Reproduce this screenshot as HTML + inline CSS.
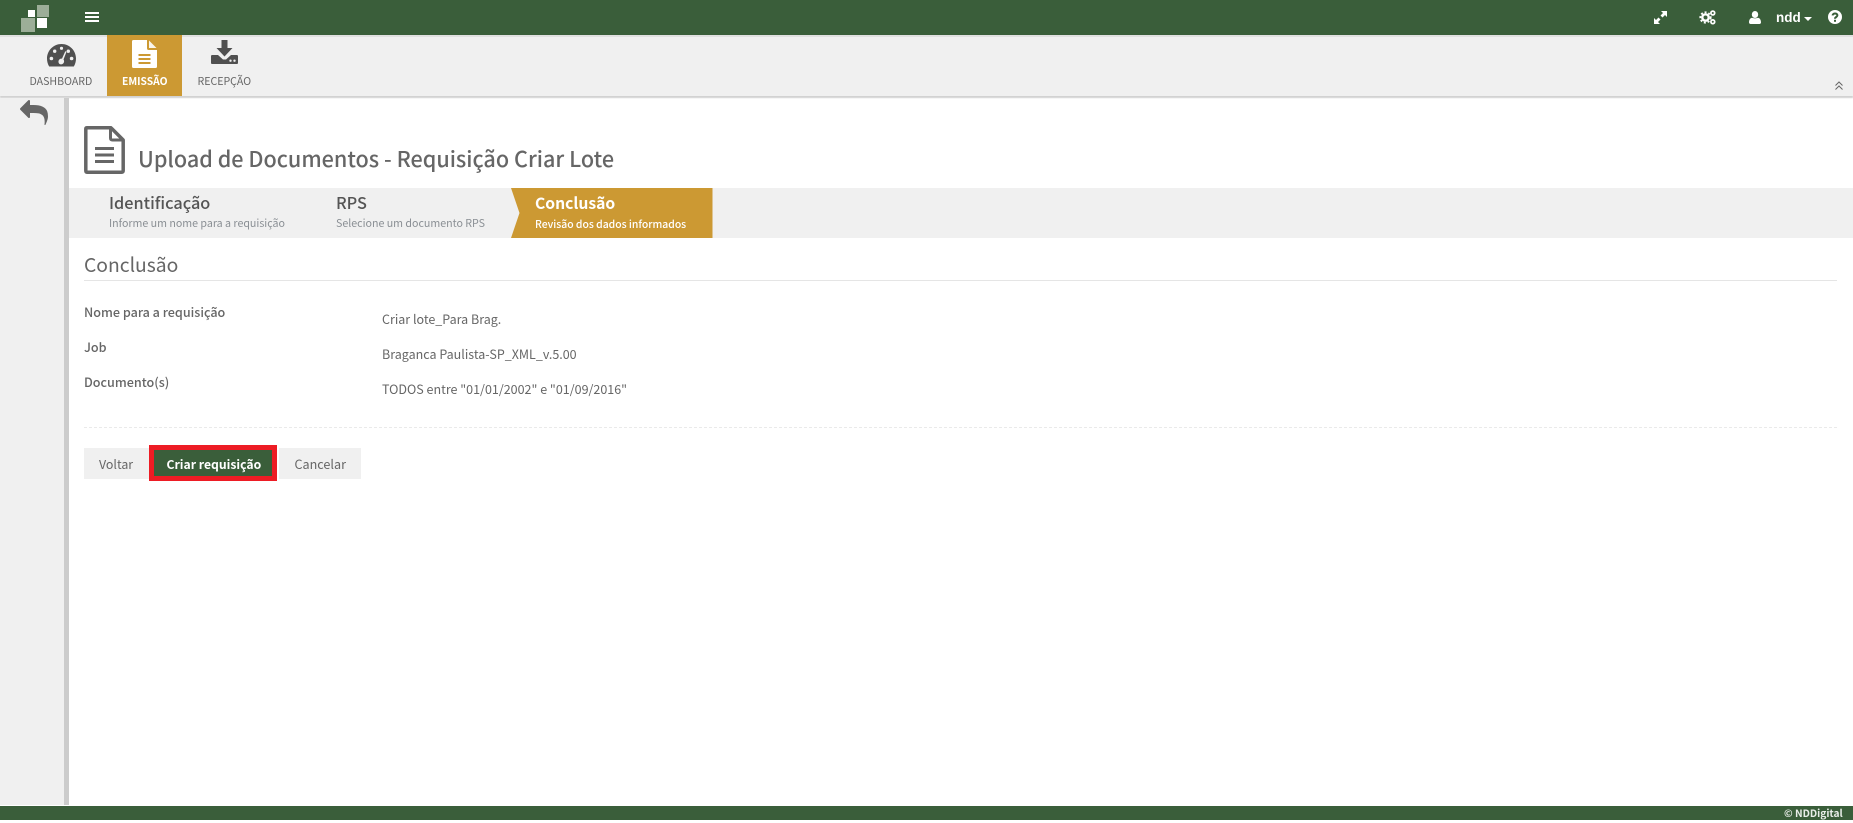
<!DOCTYPE html>
<html lang="pt"><head><meta charset="utf-8"><title>Upload de Documentos</title>
<style>
html,body{margin:0;padding:0;background:#fff}
body{width:1853px;height:821px;position:relative;overflow:hidden;font-family:"Noto Sans CJK JP","Liberation Sans",sans-serif;color:#666}
.a{position:absolute}
.t{position:absolute;white-space:nowrap;line-height:20px;height:20px}
svg{position:absolute;display:block;overflow:visible}
</style></head><body>
<div class="a" style="left:0;top:0;width:1853px;height:35px;background:#3a5e3a"></div>
<div class="a" style="left:0;top:35px;width:1853px;height:61px;background:#f0f0f0;box-shadow:0 2px 1px #d2d2d2"></div>
<div class="a" style="left:0;top:35px;width:1853px;height:2px;background:#e0e0e0"></div>
<div class="a" style="left:21px;top:18px;width:14px;height:14px;background:#9cae98"></div>
<div class="a" style="left:37px;top:5px;width:12px;height:12px;background:#9cae98"></div>
<div class="a" style="left:28px;top:10px;width:7px;height:7px;background:#fff"></div>
<div class="a" style="left:37px;top:18px;width:10px;height:10px;background:#fff"></div>
<div class="a" style="left:85px;top:12px;width:14px;height:2px;background:#fff"></div>
<div class="a" style="left:85px;top:16px;width:14px;height:2px;background:#fff"></div>
<div class="a" style="left:85px;top:20px;width:14px;height:2px;background:#fff"></div>

<svg style="left:1654px;top:11px" width="13" height="13" viewBox="0 0 13 13"><path fill="#fff" d="M7 0H13V6L11 4 8.500 6.500 6.500 4.500 9 2zM6 13H0V7L2 9 4.500 6.500 6.500 8.500 4 11z"/></svg>
<svg style="left:1700px;top:10px" width="16" height="15" viewBox="0 0 16 15"><circle cx="5.500" cy="7.500" r="3.200" fill="none" stroke="#fff" stroke-width="2.400"/><circle cx="5.500" cy="7.500" r="5.200" fill="none" stroke="#fff" stroke-width="1.800" stroke-dasharray="2 1.900"/><circle cx="12.800" cy="3" r="1.900" fill="none" stroke="#fff" stroke-width="1.700"/><circle cx="12.800" cy="11.800" r="1.900" fill="none" stroke="#fff" stroke-width="1.700"/></svg>
<svg style="left:1749px;top:11px" width="12" height="13" viewBox="0 0 12 13"><ellipse cx="6" cy="3.500" rx="3.200" ry="3.500" fill="#fff"/><path fill="#fff" d="M0 11.500C0 8.500 1.500 7 3.200 6.800 4 7.500 8 7.500 8.800 6.800 10.500 7 12 8.500 12 11.500 12 12.500 11 13 10.500 13H1.500C1 13 0 12.500 0 11.500z"/></svg>
<div class="t" style="left:1776px;top:8px;font:bold 13.500px/20px 'Liberation Sans',sans-serif;color:#fff">ndd</div>
<svg style="left:1804px;top:17px" width="8" height="4" viewBox="0 0 8 4"><path fill="#fff" d="M0 0H8L4 4z"/></svg>
<svg style="left:1828px;top:10px" width="14" height="14" viewBox="0 0 14 14"><circle cx="7" cy="7" r="7" fill="#fff"/><path fill="none" stroke="#3a5e3a" stroke-width="2" d="M4.600 5.400C4.800 2.800 9.400 2.900 9.400 5.300 9.400 7 7 7 7 8.700"/><rect x="6" y="9.800" width="2" height="2" fill="#3a5e3a"/></svg>

<svg style="left:46.500px;top:44px" width="29" height="22.500" viewBox="0 0 29 22.500"><path fill="#505050" fill-rule="evenodd" d="M14.500 0C6.500 0 0 6.500 0 14.500 0 17.500.8 20.200 2.200 22.500H26.800C28.200 20.200 29 17.500 29 14.500 29 6.500 22.500 0 14.500 0zM14.500 2.700A1.600 1.600 0 1 1 14.500 5.900 1.600 1.600 0 1 1 14.500 2.700zM7.700 5.500A1.700 1.700 0 1 1 7.700 8.900 1.700 1.700 0 1 1 7.700 5.500zM21.300 5.500A1.700 1.700 0 1 1 21.300 8.900 1.700 1.700 0 1 1 21.300 5.500zM4.400 12.700A1.800 1.800 0 1 1 4.400 16.300 1.800 1.800 0 1 1 4.400 12.700zM24.600 12.700A1.800 1.800 0 1 1 24.600 16.300 1.800 1.800 0 1 1 24.600 12.700zM18.300 7.200L19.500 7.700 16.500 15.500C18 17.500 16.500 20.500 14 20.400 11.500 20.300 10.500 17 12.600 15.200 13.200 14.700 14.200 14.500 15 14.600z"/></svg>
<div class="a" style="left:107px;top:35px;width:75px;height:61px;background:#cc9933"></div>
<svg style="left:132px;top:40px" width="25" height="28" viewBox="0 0 25 28"><path fill="#fff" d="M1.500 0H15V8C15 9.500 15.500 10 17 10H25V26.500C25 27.500 24.500 28 23.500 28H1.500C.5 28 0 27.500 0 26.500V1.500C0 .5.5 0 1.500 0z"/><path fill="#fff" d="M17 0.500L24.500 8H17z" opacity=".9"/><rect x="6.500" y="14" width="12" height="2" fill="#cc9933"/><rect x="6.500" y="18" width="12" height="2" fill="#cc9933"/><rect x="6.500" y="22" width="12" height="2" fill="#cc9933"/></svg>
<svg style="left:211px;top:40px" width="27" height="24" viewBox="0 0 27 24"><path fill="#505050" d="M10.500 0H16.500V8H21.500L13.500 16.500 5.500 8H10.500z"/><path fill="#505050" fill-rule="evenodd" d="M1 15H7L12 19.500H15L20 15H26C26.500 15 27 15.500 27 16V23C27 23.500 26.500 24 26 24H1C.5 24 0 23.500 0 23V16C0 15.500.5 15 1 15zM19.500 19.500A1.200 1.200 0 1 0 19.500 21.900 1.200 1.200 0 1 0 19.500 19.500zM23.500 19.500A1.200 1.200 0 1 0 23.500 21.900 1.200 1.200 0 1 0 23.500 19.500z"/></svg>
<div class="t" style="left:29.500px;top:71.500px;font-size:10.600px;color:#666">DASHBOARD</div>
<div class="t" style="left:122px;top:71px;font-size:10.300px;font-weight:700;color:#fff">EMISSÃO</div>
<div class="t" style="left:197.500px;top:71.500px;font-size:10.600px;color:#666">RECEPÇÃO</div>
<svg style="left:1835px;top:81px" width="8" height="9" viewBox="0 0 8 9"><path fill="none" stroke="#666" stroke-width="1" d="M.5 4.500L4 1 7.500 4.500M.5 8.500L4 5 7.500 8.500"/></svg>

<div class="a" style="left:0;top:98px;width:64px;height:707px;background:#f0f0f0"></div>
<div class="a" style="left:64px;top:98px;width:5px;height:707px;background:#ccc"></div>
<svg style="left:20px;top:101px" width="28" height="25" viewBox="0 0 1792 1600"><path fill="#666" transform="translate(0 -128)" d="M1792 1120q0 166-127 451-3 7-10.500 24t-13.500 30-13 22q-12 17-28 17-15 0-23.500-10t-8.500-25q0-9 2.500-26.500t2.500-23.500q5-68 5-123 0-101-17.500-181t-48.500-138.500-80-101-105.500-69.500-133-42.500-154-21.500-175.500-6h-224v256q0 26-19 45t-45 19-45-19l-512-512q-19-19-19-45t19-45l512-512q19-19 45-19t45 19 19 45v256h224q713 0 875 403 53 134 53 333z"/></svg>

<svg style="left:84px;top:126px" width="41" height="48" viewBox="0 0 41 48"><path fill="none" stroke="#666" stroke-width="3.500" stroke-linejoin="round" d="M3 1.800H27L39.200 14V44.500C39.200 45.500 39 46.200 37.500 46.200H3C2 46.200 1.800 45.500 1.800 44.500V3C1.800 2 2 1.800 3 1.800z"/><path fill="none" stroke="#666" stroke-width="3" stroke-linejoin="round" d="M26.500 2V12C26.500 13.500 27 14 28.500 14H39"/><rect x="11" y="21" width="19" height="3" fill="#666"/><rect x="11" y="27.500" width="19" height="3" fill="#666"/><rect x="11" y="34" width="19" height="3" fill="#666"/></svg>
<div class="t" style="left:138px;top:147px;height:24px;line-height:24px;font-size:21.600px;font-weight:500;color:#666">Upload de Documentos - Requisição Criar Lote</div>

<div class="a" style="left:69px;top:188px;width:1784px;height:50px;background:#f0f0f0"></div>
<div class="t" style="left:109px;top:192px;font-size:16.300px;font-weight:500;color:#555">Identificação</div>
<div class="t" style="left:109px;top:214px;font-size:10.650px;color:#8a8f94">Informe um nome para a requisição</div>
<div class="t" style="left:336px;top:192px;font-size:16.300px;font-weight:500;color:#555">RPS</div>
<div class="t" style="left:336px;top:214px;font-size:10.650px;color:#8a8f94">Selecione um documento RPS</div>
<svg style="left:510.500px;top:188px" width="202" height="50" viewBox="0 0 202 50"><path fill="#cc9933" d="M0 0H201.500V50H0L8.500 25z"/></svg>
<div class="t" style="left:535px;top:193px;font-size:15.700px;font-weight:700;color:#fff">Conclusão</div>
<div class="t" style="left:535px;top:214px;font-size:10.400px;font-weight:500;color:#fff">Revisão dos dados informados</div>

<div class="t" style="left:84px;top:252.500px;font-size:19.300px;font-weight:400;color:#666;height:22px;line-height:22px">Conclusão</div>
<div class="a" style="left:84px;top:280px;width:1753px;height:1px;background:#e5e5e5"></div>

<div class="t" style="left:84px;top:302px;font-size:12.600px;font-weight:500;color:#666">Nome para a requisição</div>
<div class="t" style="left:84px;top:337px;font-size:12.600px;font-weight:500;color:#666">Job</div>
<div class="t" style="left:84px;top:372px;font-size:12.600px;font-weight:500;color:#666">Documento(s)</div>
<div class="t" style="left:382px;top:309px;font-size:12.500px;color:#666">Criar lote_Para Brag.</div>
<div class="t" style="left:382px;top:344px;font-size:12.500px;color:#666">Braganca Paulista-SP_XML_v.5.00</div>
<div class="t" style="left:382px;top:379px;font-size:12.500px;color:#666">TODOS entre "01/01/2002" e "01/09/2016"</div>

<div class="a" style="left:84px;top:427px;width:1753px;height:0;border-top:1px dashed #eaeaea"></div>

<div class="a" style="left:84px;top:448px;width:66px;height:31px;background:#f0f0f0"></div>
<div class="t" style="left:99px;top:454px;font-size:12.400px;color:#666">Voltar</div>
<div class="a" style="left:149px;top:445px;width:128px;height:36px;background:#ed1c24"></div>
<div class="a" style="left:154px;top:450px;width:118px;height:26px;background:#3a5e3a"></div>
<div class="t" style="left:166.500px;top:454px;font-size:12.200px;font-weight:700;color:#fff">Criar requisição</div>
<div class="a" style="left:279px;top:448px;width:82px;height:31px;background:#f0f0f0"></div>
<div class="t" style="left:294.500px;top:454px;font-size:12.600px;color:#666">Cancelar</div>

<div class="a" style="left:0;top:806px;width:1853px;height:13.500px;background:#3a5e3a"></div>
<div class="t" style="left:1784px;top:803px;font-size:10.200px;font-weight:700;color:#e8ede8">© NDDigital</div>
</body></html>
